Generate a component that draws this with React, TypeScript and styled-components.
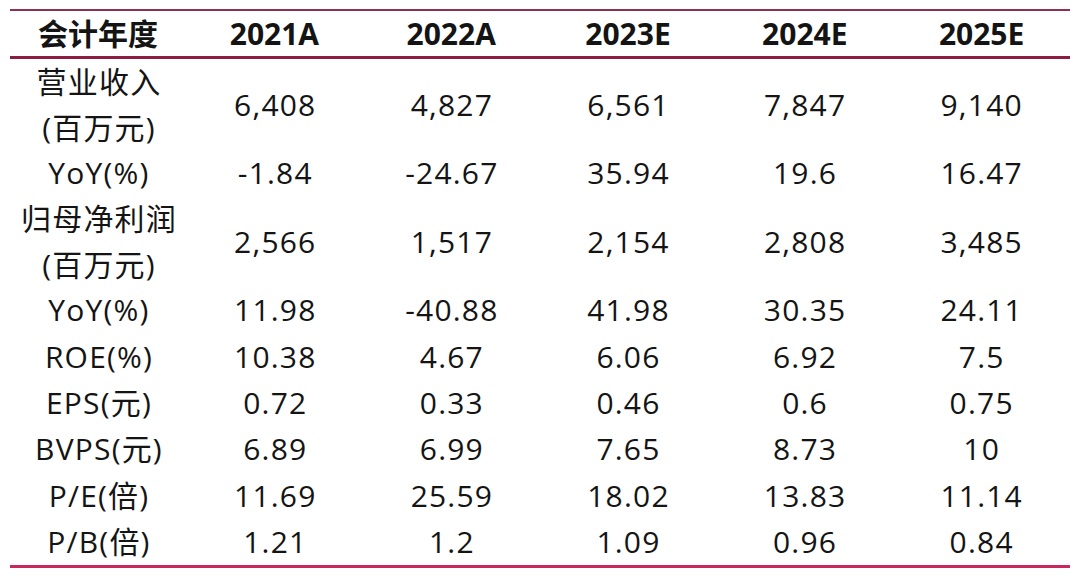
import styled, { createGlobalStyle } from "styled-components";

const GlobalStyle = createGlobalStyle`
  html, body {
    margin: 0;
    padding: 0;
    background: #ffffff;
  }
`;

type Row = {
  label: string[];
  values: string[];
};

const years = ["2021A", "2022A", "2023E", "2024E", "2025E"];

const rows: Row[] = [
  { label: ["营业收入", "(百万元)"], values: ["6,408", "4,827", "6,561", "7,847", "9,140"] },
  { label: ["YoY(%)"], values: ["-1.84", "-24.67", "35.94", "19.6", "16.47"] },
  { label: ["归母净利润", "(百万元)"], values: ["2,566", "1,517", "2,154", "2,808", "3,485"] },
  { label: ["YoY(%)"], values: ["11.98", "-40.88", "41.98", "30.35", "24.11"] },
  { label: ["ROE(%)"], values: ["10.38", "4.67", "6.06", "6.92", "7.5"] },
  { label: ["EPS(元)"], values: ["0.72", "0.33", "0.46", "0.6", "0.75"] },
  { label: ["BVPS(元)"], values: ["6.89", "6.99", "7.65", "8.73", "10"] },
  { label: ["P/E(倍)"], values: ["11.69", "25.59", "18.02", "13.83", "11.14"] },
  { label: ["P/B(倍)"], values: ["1.21", "1.2", "1.09", "0.96", "0.84"] },
];

export default function App() {
  return (
    <>
      <GlobalStyle />
      <Page>
        <Table>
          <HeaderRow>
            <Cell>会计年度</Cell>
            {years.map((y) => (
              <Cell key={y}>{y}</Cell>
            ))}
          </HeaderRow>
          {rows.map((row, i) => (
            <BodyRow key={i} $double={row.label.length > 1}>
              <LabelCell>
                {row.label.map((l) => (
                  <span key={l}>{l}</span>
                ))}
              </LabelCell>
              {row.values.map((v, j) => (
                <Cell key={j}>{v}</Cell>
              ))}
            </BodyRow>
          ))}
        </Table>
      </Page>
    </>
  );
}

const Page = styled.div`
  width: 1080px;
  height: 579px;
  padding: 9px 10px 0;
  box-sizing: border-box;
  font-family: "Open Sans", "Noto Sans CJK SC", sans-serif;
  color: #141414;
`;

const Table = styled.div`
  width: 1060px;
  border-top: 2px solid #8e3150;
  border-bottom: 3px solid #c8285c;
`;

const RowBase = styled.div`
  display: grid;
  grid-template-columns: 176px repeat(5, 1fr);
  align-items: center;
`;

const HeaderRow = styled(RowBase)`
  height: 45px;
  border-bottom: 3px solid #8a1d41;
  font-size: 30px;
  font-weight: 700;
`;

const BodyRow = styled(RowBase)<{ $double: boolean }>`
  height: ${(p) => (p.$double ? "91px" : "46.3px")};
  font-size: 30px;
  letter-spacing: 1.2px;
  padding-left: 1px;
`;

const Cell = styled.div`
  text-align: center;
  line-height: 46px;
  white-space: nowrap;
`;

const LabelCell = styled.div`
  display: flex;
  flex-direction: column;
  align-items: center;
  line-height: 46px;
  white-space: nowrap;
`;
